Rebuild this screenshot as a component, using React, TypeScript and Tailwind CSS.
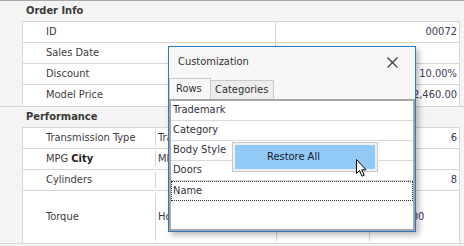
import React from 'react'

const font = "font-['DejaVu_Sans_Condensed','Liberation_Sans',sans-serif]"

function Category({ title }: { title: string }) {
  return (
    <div className="h-[20px] flex items-center pl-[26px] font-bold text-[#3a3a3a]">{title}</div>
  )
}

function SimpleRow({ name, value, last }: { name: string; value?: string; last?: boolean }) {
  return (
    <div className={`flex h-[21px] ${last ? '' : 'border-b border-[#d6d6d6]'}`}>
      <div className="w-[253px] border-r border-[#d6d6d6] flex items-center pl-[23px] text-[#3c3c3c]">{name}</div>
      <div className="flex-1 flex items-center justify-end pr-[2px] text-[#3a3a5a]">{value}</div>
    </div>
  )
}

function MultiRow({
  name,
  cells,
  tall,
  last,
}: {
  name: React.ReactNode
  cells: [string, string, string, boolean?]
  tall?: boolean
  last?: boolean
}) {
  return (
    <div className={`flex ${tall ? 'h-[52px]' : 'h-[21px]'} ${last ? '' : 'border-b border-[#d6d6d6]'}`}>
      <div className="w-[132px] flex items-center pl-[23px] text-[#3c3c3c]">{name}</div>
      <div className="flex-1 flex py-[2px]">
        <div className="w-[121px] border-l border-[#d6d6d6] flex items-center pl-[2px] overflow-hidden whitespace-nowrap text-[#3c3c3c]">
          {cells[0]}
        </div>
        <div className="w-[93px] border-l border-[#d6d6d6] flex items-center pl-[2px] overflow-hidden whitespace-nowrap text-[#3c3c3c]">
          {cells[1]}
        </div>
        <div
          className={`flex-1 border-l border-[#d6d6d6] flex items-center overflow-hidden whitespace-nowrap text-[#3a3a5a] ${
            cells[3] ? 'pl-[26px]' : 'justify-end pr-[2px]'
          }`}
        >
          {cells[2]}
        </div>
      </div>
    </div>
  )
}

function Cursor() {
  return (
    <svg width="14" height="20" viewBox="0 0 14 20" className="absolute left-[355px] top-[157px]">
      <path
        d="M1.5 1.5 L1.5 15.5 L4.5 12.5 L7 18.2 L9.2 17.2 L6.8 11.8 L11 11.8 Z"
        fill="#fff"
        stroke="#000"
        strokeWidth="1"
        strokeLinejoin="miter"
      />
    </svg>
  )
}

function CustomizationDialog() {
  const items = ['Trademark', 'Category', 'Body Style', 'Doors']
  return (
    <div className="absolute left-[168px] top-[45px] w-[248px] h-[186px] border border-[#2b79c4] bg-[#f7f7f7] shadow-[3px_3px_6px_rgba(0,0,0,0.28)] flex flex-col">
      <div className="h-[31px] flex items-center justify-between pl-[9px] pr-[17px] text-[#303030]">
        <span>Customization</span>
        <svg width="11" height="11" viewBox="0 0 11 11">
          <path d="M0.5 0.5 L10.5 10.5 M10.5 0.5 L0.5 10.5" stroke="#333" strokeWidth="1.1" />
        </svg>
      </div>
      <div className="h-[21px] flex items-end">
        <div className="h-[21px] w-[42px] border border-b-0 border-[#c8c8c8] bg-[#f7f7f7] flex items-center pl-[6px] text-[#303030]">
          Rows
        </div>
        <div className="h-[19px] w-[63px] border border-l-0 border-b-0 border-[#c8c8c8] bg-[#ededed] flex items-center pl-[4px] text-[#303030]">
          Categories
        </div>
      </div>
      <div className="h-[132px] border-2 border-[#a6a6a6] bg-white">
        {items.map((it) => (
          <div key={it} className="h-[20px] border-b border-[#d9d9d9] flex items-center pl-[2px] text-[#303040]">
            {it}
          </div>
        ))}
        <div className="h-[20px] border border-dotted border-[#333] flex items-center pl-[1px] text-[#303040]">Name</div>
      </div>
    </div>
  )
}

function ContextMenu() {
  return (
    <div className="absolute left-[232px] top-[141px] w-[146px] h-[30px] border border-[#c9c9c9] bg-[#f0f0f0] p-[2px]">
      <div className="h-full bg-[#91c9f7] flex items-center pl-[32px] text-[#1a1a2a]">Restore All</div>
    </div>
  )
}

export default function App() {
  return (
    <div className={`relative w-[464px] h-[246px] overflow-hidden bg-[#f4f4f4] border-t border-[#a8a8a8] text-[11px] ${font}`}>
      <div className="border-b border-[#d6d6d6]">
        <Category title="Order Info" />
        <div className="ml-[22px] w-[438px] border-t border-l border-r border-[#d6d6d6] bg-white">
          <SimpleRow name="ID" value="00072" />
          <SimpleRow name="Sales Date" value="" />
          <SimpleRow name="Discount" value="10.00%" />
          <SimpleRow name="Model Price" value="$22,460.00" last />
        </div>
      </div>
      <div className="border-b border-[#d6d6d6]">
        <Category title="Performance" />
        <div className="ml-[22px] w-[438px] border-t border-l border-r border-[#d6d6d6] bg-white">
          <MultiRow name="Transmission Type" cells={['Transmission', 'Speeds', '6']} />
          <MultiRow
            name={
              <span>
                MPG <b className="text-[#222]">City</b>
              </span>
            }
            cells={['MPG Highway', '', '']}
          />
          <MultiRow name="Cylinders" cells={['', '', '8']} />
          <MultiRow name="Torque" cells={['Horsepower', '', '4,400', true]} tall last />
        </div>
      </div>
      <CustomizationDialog />
      <ContextMenu />
      <Cursor />
    </div>
  )
}
